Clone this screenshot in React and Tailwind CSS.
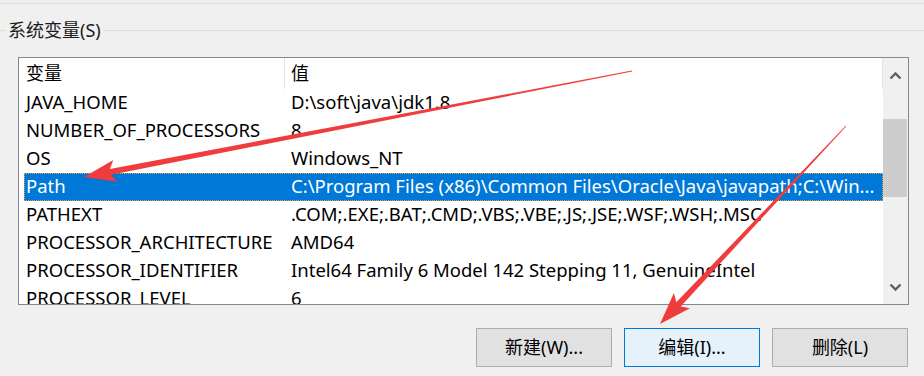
import React from "react";

const rows = [
  ["JAVA_HOME", "D:\\soft\\java\\jdk1.8"],
  ["NUMBER_OF_PROCESSORS", "8"],
  ["OS", "Windows_NT"],
  ["Path", "C:\\Program Files (x86)\\Common Files\\Oracle\\Java\\javapath;C:\\Win..."],
  ["PATHEXT", ".COM;.EXE;.BAT;.CMD;.VBS;.VBE;.JS;.JSE;.WSF;.WSH;.MSC"],
  ["PROCESSOR_ARCHITECTURE", "AMD64"],
  ["PROCESSOR_IDENTIFIER", "Intel64 Family 6 Model 142 Stepping 11, GenuineIntel"],
  ["PROCESSOR_LEVEL", "6"],
];

// tapered shaft + triangular head, from (x1,y1) to the tip (x2,y2)
const arrowPoints = (x1, y1, x2, y2, headLen, headHalf, w0, w1) => {
  const dx = x2 - x1;
  const dy = y2 - y1;
  const len = Math.hypot(dx, dy);
  const ux = dx / len;
  const uy = dy / len;
  const nx = -uy;
  const ny = ux;
  const bx = x2 - ux * headLen;
  const by = y2 - uy * headLen;
  const p = [
    [x1 + (nx * w0) / 2, y1 + (ny * w0) / 2],
    [bx + ux * 5 + (nx * w1) / 2, by + uy * 5 + (ny * w1) / 2],
    [bx + nx * headHalf, by + ny * headHalf],
    [x2, y2],
    [bx - nx * headHalf, by - ny * headHalf],
    [bx + ux * 5 - (nx * w1) / 2, by + uy * 5 - (ny * w1) / 2],
    [x1 - (nx * w0) / 2, y1 - (ny * w0) / 2],
  ];
  return p.map(([x, y]) => `${x.toFixed(1)},${y.toFixed(1)}`).join(" ");
};

const Chevron = ({ down }) => (
  <svg width="13" height="9" viewBox="0 0 13 9">
    <path
      d={down ? "M1.5 1.5 L6.5 6.5 L11.5 1.5" : "M1.5 7.5 L6.5 2.5 L11.5 7.5"}
      fill="none"
      stroke="#606060"
      strokeWidth="2.4"
    />
  </svg>
);

export default function App() {
  return (
    <div
      className="relative w-[924px] h-[376px] overflow-hidden bg-[#f0f0f0] text-[18px] text-black"
      style={{ fontFamily: '"Noto Sans", "Noto Sans CJK SC", sans-serif' }}
    >
      <div className="pt-[3px]">
        <div className="h-px bg-[#dcdcdc]" />
      </div>

      <div className="flex items-center h-[22px] mt-[15px]">
        <div className="w-[6px] h-px bg-[#dcdcdc]" />
        <span className="px-[2px] leading-[22px] text-[#1a1a1a]">系统变量(S)</span>
        <div className="flex-1 h-px bg-[#dcdcdc]" />
      </div>

      <div className="ml-[18px] mt-[16px] w-[891px] h-[248px] border border-[#828790] bg-white flex">
        <div className="flex-1 overflow-hidden">
          <div className="flex h-[31px] items-center border-r border-[#e5e5e5]">
            <div className="w-[266px] h-full flex items-center pl-[7px] border-r border-[#e5e5e5]">
              变量
            </div>
            <div className="pl-[6px]">值</div>
          </div>
          {rows.map(([name, value]) => {
            const selected = name === "Path";
            return (
              <div
                key={name}
                className={
                  selected
                    ? "flex h-[28px] items-center pb-[2px] ml-[5px] text-[18.5px] bg-[#0078d7] text-white outline-1 outline-dotted outline-offset-[-1px] outline-[#e8a040]"
                    : "flex h-[28px] items-center pb-[2px] ml-[5px] text-[18.5px]"
                }
              >
                <div className="w-[261px] pl-[2px] whitespace-nowrap">{name}</div>
                <div className="pl-[6px] whitespace-nowrap overflow-hidden">{value}</div>
              </div>
            );
          })}
        </div>
        <div className="w-[25px] bg-[#f0f0f0] flex flex-col">
          <div className="h-[32px] flex items-center justify-center pt-[2px]">
            <Chevron />
          </div>
          <div className="h-[29px]" />
          <div className="h-[78px] bg-[#cdcdcd] mr-px" />
          <div className="flex-1" />
          <div className="h-[30px] flex items-center justify-center pb-[4px]">
            <Chevron down />
          </div>
        </div>
      </div>

      <div className="flex justify-end gap-[12px] pr-[16px] mt-[23px]">
        <button className="w-[136px] h-[39px] bg-[#e1e1e1] border border-[#adadad] text-[18px]">
          新建(W)...
        </button>
        <button className="w-[136px] h-[39px] bg-[#e5f1fb] border border-[#0078d7] text-[18px]">
          编辑(I)...
        </button>
        <button className="w-[136px] h-[39px] bg-[#e1e1e1] border border-[#adadad] text-[18px]">
          删除(L)
        </button>
      </div>

      <svg className="absolute inset-0 pointer-events-none" width="924" height="376">
        <polygon points={arrowPoints(632, 71, 84, 177, 32, 11, 0.8, 6)} fill="#f03c3c" />
        <polygon points={arrowPoints(846, 126, 660, 324, 32, 11, 0.8, 6)} fill="#f03c3c" />
      </svg>
    </div>
  );
}
